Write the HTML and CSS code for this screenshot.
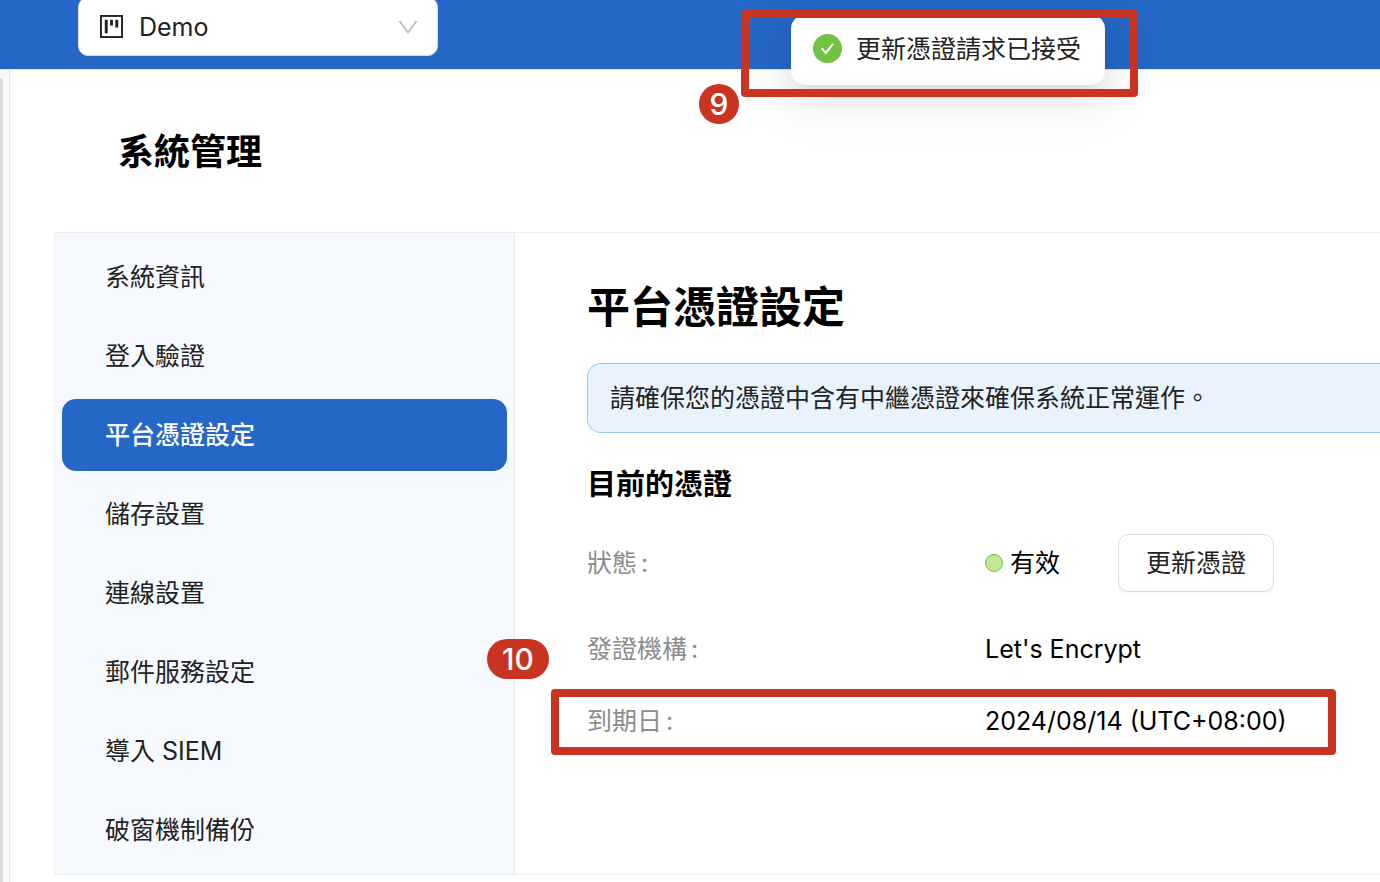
FILE: index.html
```html
<!DOCTYPE html>
<html lang="zh-Hant">
<head>
    <meta charset="UTF-8">
    <meta name="viewport" content="width=device-width, initial-scale=1.0">
    <title>系統管理</title>
    <link rel="stylesheet" href="styles.css">
</head>
<body>
    <header class="topbar">
        <div class="project-picker">
            <svg class="project-icon" viewBox="0 0 24 24" aria-hidden="true">
                <rect x="1" y="1" width="22" height="22" fill="none" stroke="#222" stroke-width="2"/>
                <path d="M5 5h3v14H5zM10.500 5h3v6h-3zM16 5h3v8h-3z" fill="#222"/>
            </svg>
            <select class="project-select" aria-label="Demo">
                <option>Demo</option>
            </select>
            <svg class="project-arrow" viewBox="0 0 20 14" aria-hidden="true">
                <path d="M1.500 1L10 12.500 18.500 1" fill="none" stroke="#bfbfbf" stroke-width="2"/>
            </svg>
        </div>
    </header>

    <div class="toast" role="status">
        <svg class="toast-icon" viewBox="0 0 29 29" aria-hidden="true">
            <circle cx="14.500" cy="14.500" r="14.500" fill="#72c140"/>
            <path d="M8.800 14.200l4 4.800 7.200-9.200" fill="none" stroke="#fff" stroke-width="1.900"/>
        </svg>
        <span>更新憑證請求已接受</span>
        <div class="mark mark-toast"></div>
        <span class="step step-toast">9</span>
    </div>

    <div class="layout">
        <aside class="rail"><div class="rail-thumb"></div></aside>

        <main class="page">
            <h1>系統管理</h1>

            <div class="panel">
                <nav class="menu">
                    <a href="#">系統資訊</a>
                    <a href="#">登入驗證</a>
                    <a href="#" class="active">平台憑證設定</a>
                    <a href="#">儲存設置</a>
                    <a href="#">連線設置</a>
                    <a href="#">郵件服務設定</a>
                    <a href="#">導入 SIEM</a>
                    <a href="#">破窗機制備份</a>
                </nav>

                <section class="content">
                    <h2>平台憑證設定</h2>
                    <div class="alert">請確保您的憑證中含有中繼憑證來確保系統正常運作。</div>

                    <h3>目前的憑證</h3>
                    <dl class="details">
                        <div class="row row-status">
                            <dt>狀態<span class="colon">:</span></dt>
                            <dd>
                                <span class="dot"></span>
                                <span>有效</span>
                                <button type="button" class="btn-renew">更新憑證</button>
                            </dd>
                        </div>
                        <div class="row">
                            <dt>發證機構<span class="colon">:</span></dt>
                            <dd>Let's Encrypt</dd>
                        </div>
                        <div class="row">
                            <dt>到期日<span class="colon">:</span></dt>
                            <dd>2024/08/14 (UTC+08:00)</dd>
                            <div class="mark mark-expiry"></div>
                            <span class="step step-expiry">10</span>
                        </div>
                    </dl>
                </section>
            </div>
        </main>
    </div>
</body>
</html>
```

FILE: styles.css
```css
* {
    margin: 0;
    padding: 0;
    box-sizing: border-box;
}

body {
    display: flex;
    flex-direction: column;
    min-height: 100vh;
    background: #fff;
    color: #000;
    font-family: Inter, "Noto Sans CJK TC", sans-serif;
    font-size: 25px;
    line-height: 40px;
    overflow-x: hidden;
}

.topbar {
    height: 70px;
    padding-left: 78px;
    background: #2567c7;
    border-bottom: 1px solid #dfe5ee;
}

.project-picker {
    position: relative;
    width: 360px;
    margin-top: -3px;
}

.project-select {
    display: block;
    width: 100%;
    height: 59px;
    padding: 0 60px;
    appearance: none;
    background: #fff;
    border: 1px solid #d9d9d9;
    border-radius: 10px;
    color: #222;
    font: inherit;
}

.project-icon {
    position: absolute;
    left: 22px;
    top: 18px;
    width: 23px;
    height: 23px;
}

.project-arrow {
    position: absolute;
    right: 20px;
    top: 23px;
    width: 20px;
    height: 14px;
}

/* Toast */
.toast {
    position: absolute;
    top: 15px;
    left: 791px;
    z-index: 10;
    display: flex;
    align-items: center;
    gap: 14px;
    height: 70px;
    padding: 0 24px 2px 22px;
    background: #fff;
    border-radius: 14px;
    color: #222;
    white-space: nowrap;
    box-shadow: 0 10px 28px rgba(0, 0, 0, 0.08),
                0 5px 10px -7px rgba(0, 0, 0, 0.12),
                0 16px 48px 14px rgba(0, 0, 0, 0.05);
}

.toast-icon {
    width: 29px;
    height: 29px;
    margin-top: -2px;
}

/* Layout */
.layout {
    display: flex;
    flex: 1;
}

.rail {
    flex: none;
    display: flex;
    width: 10px;
    padding-top: 8px;
    background: #f6f9fe;
    border-right: 1px solid #e3e8ee;
}

.rail-thumb {
    width: 3px;
    background: #d9d9d9;
    border-radius: 0 3px 0 0;
}

.page {
    flex: 1;
    min-width: 0;
    padding: 57px 0 7px 44px;
}

h1 {
    margin-bottom: 55px;
    padding-left: 64px;
    font-size: 36px;
    line-height: 50px;
}

.panel {
    display: flex;
    border: 1px solid #ebedf0;
    border-right: none;
}

.menu {
    flex: none;
    display: flex;
    flex-direction: column;
    gap: 7px;
    width: 460px;
    padding: 8px 7px;
    background: #f6f9fe;
    border-right: 1px solid #e3e8ee;
}

.menu a {
    padding: 16px 43px;
    border-radius: 14px;
    color: #222;
    text-decoration: none;
}

.menu .active {
    background: #2567c7;
    color: #fff;
    font-weight: 500;
}

.content {
    flex: 1;
    min-width: 0;
    padding: 47px 0 0 72px;
}

h2 {
    font-size: 43px;
    line-height: 54px;
}

.alert {
    margin: 29px 0 32px;
    padding: 14px 22px;
    background: #e8f3fe;
    border: 1px solid #9dcbf9;
    border-right: none;
    border-radius: 14px 0 0 14px;
    color: #222;
    white-space: nowrap;
}

h3 {
    margin-bottom: 29px;
    font-size: 29px;
    line-height: 40px;
}

.details {
    display: flex;
    flex-direction: column;
    gap: 32px;
}

.row {
    position: relative;
    display: flex;
    align-items: center;
}

.row-status {
    margin-bottom: 5px;
}

.row dt {
    width: 398px;
    color: #8c8c8c;
}

.row dd {
    display: flex;
    align-items: center;
    white-space: nowrap;
}

.colon {
    margin-left: 4px;
}

.dot {
    width: 18px;
    height: 18px;
    margin-right: 7px;
    background: #c0e896;
    border: 1px solid #72c140;
    border-radius: 50%;
}

.btn-renew {
    height: 58px;
    margin-left: 58px;
    padding: 0 27px;
    background: #fff;
    border: 1px solid #d9d9d9;
    border-radius: 10px;
    box-shadow: 0 4px 0 rgba(0, 0, 0, 0.02);
    color: #222;
    font: inherit;
    cursor: pointer;
}

/* Step marks */
.mark {
    position: absolute;
    border: 8px solid #c93322;
    border-radius: 4px;
}

.mark-toast {
    top: -5px;
    right: -33px;
    bottom: -12px;
    left: -50px;
}

.mark-expiry {
    top: -12px;
    left: -36px;
    width: 785px;
    height: 66px;
}

.step {
    position: absolute;
    min-width: 40px;
    height: 40px;
    border-radius: 20px;
    background: #c93322;
    color: #fff;
    font-size: 30px;
    font-weight: 500;
    text-align: center;
}

.step-toast {
    top: 69px;
    left: -92px;
}

.step-expiry {
    top: -62px;
    left: -100px;
    width: 62px;
}
```
